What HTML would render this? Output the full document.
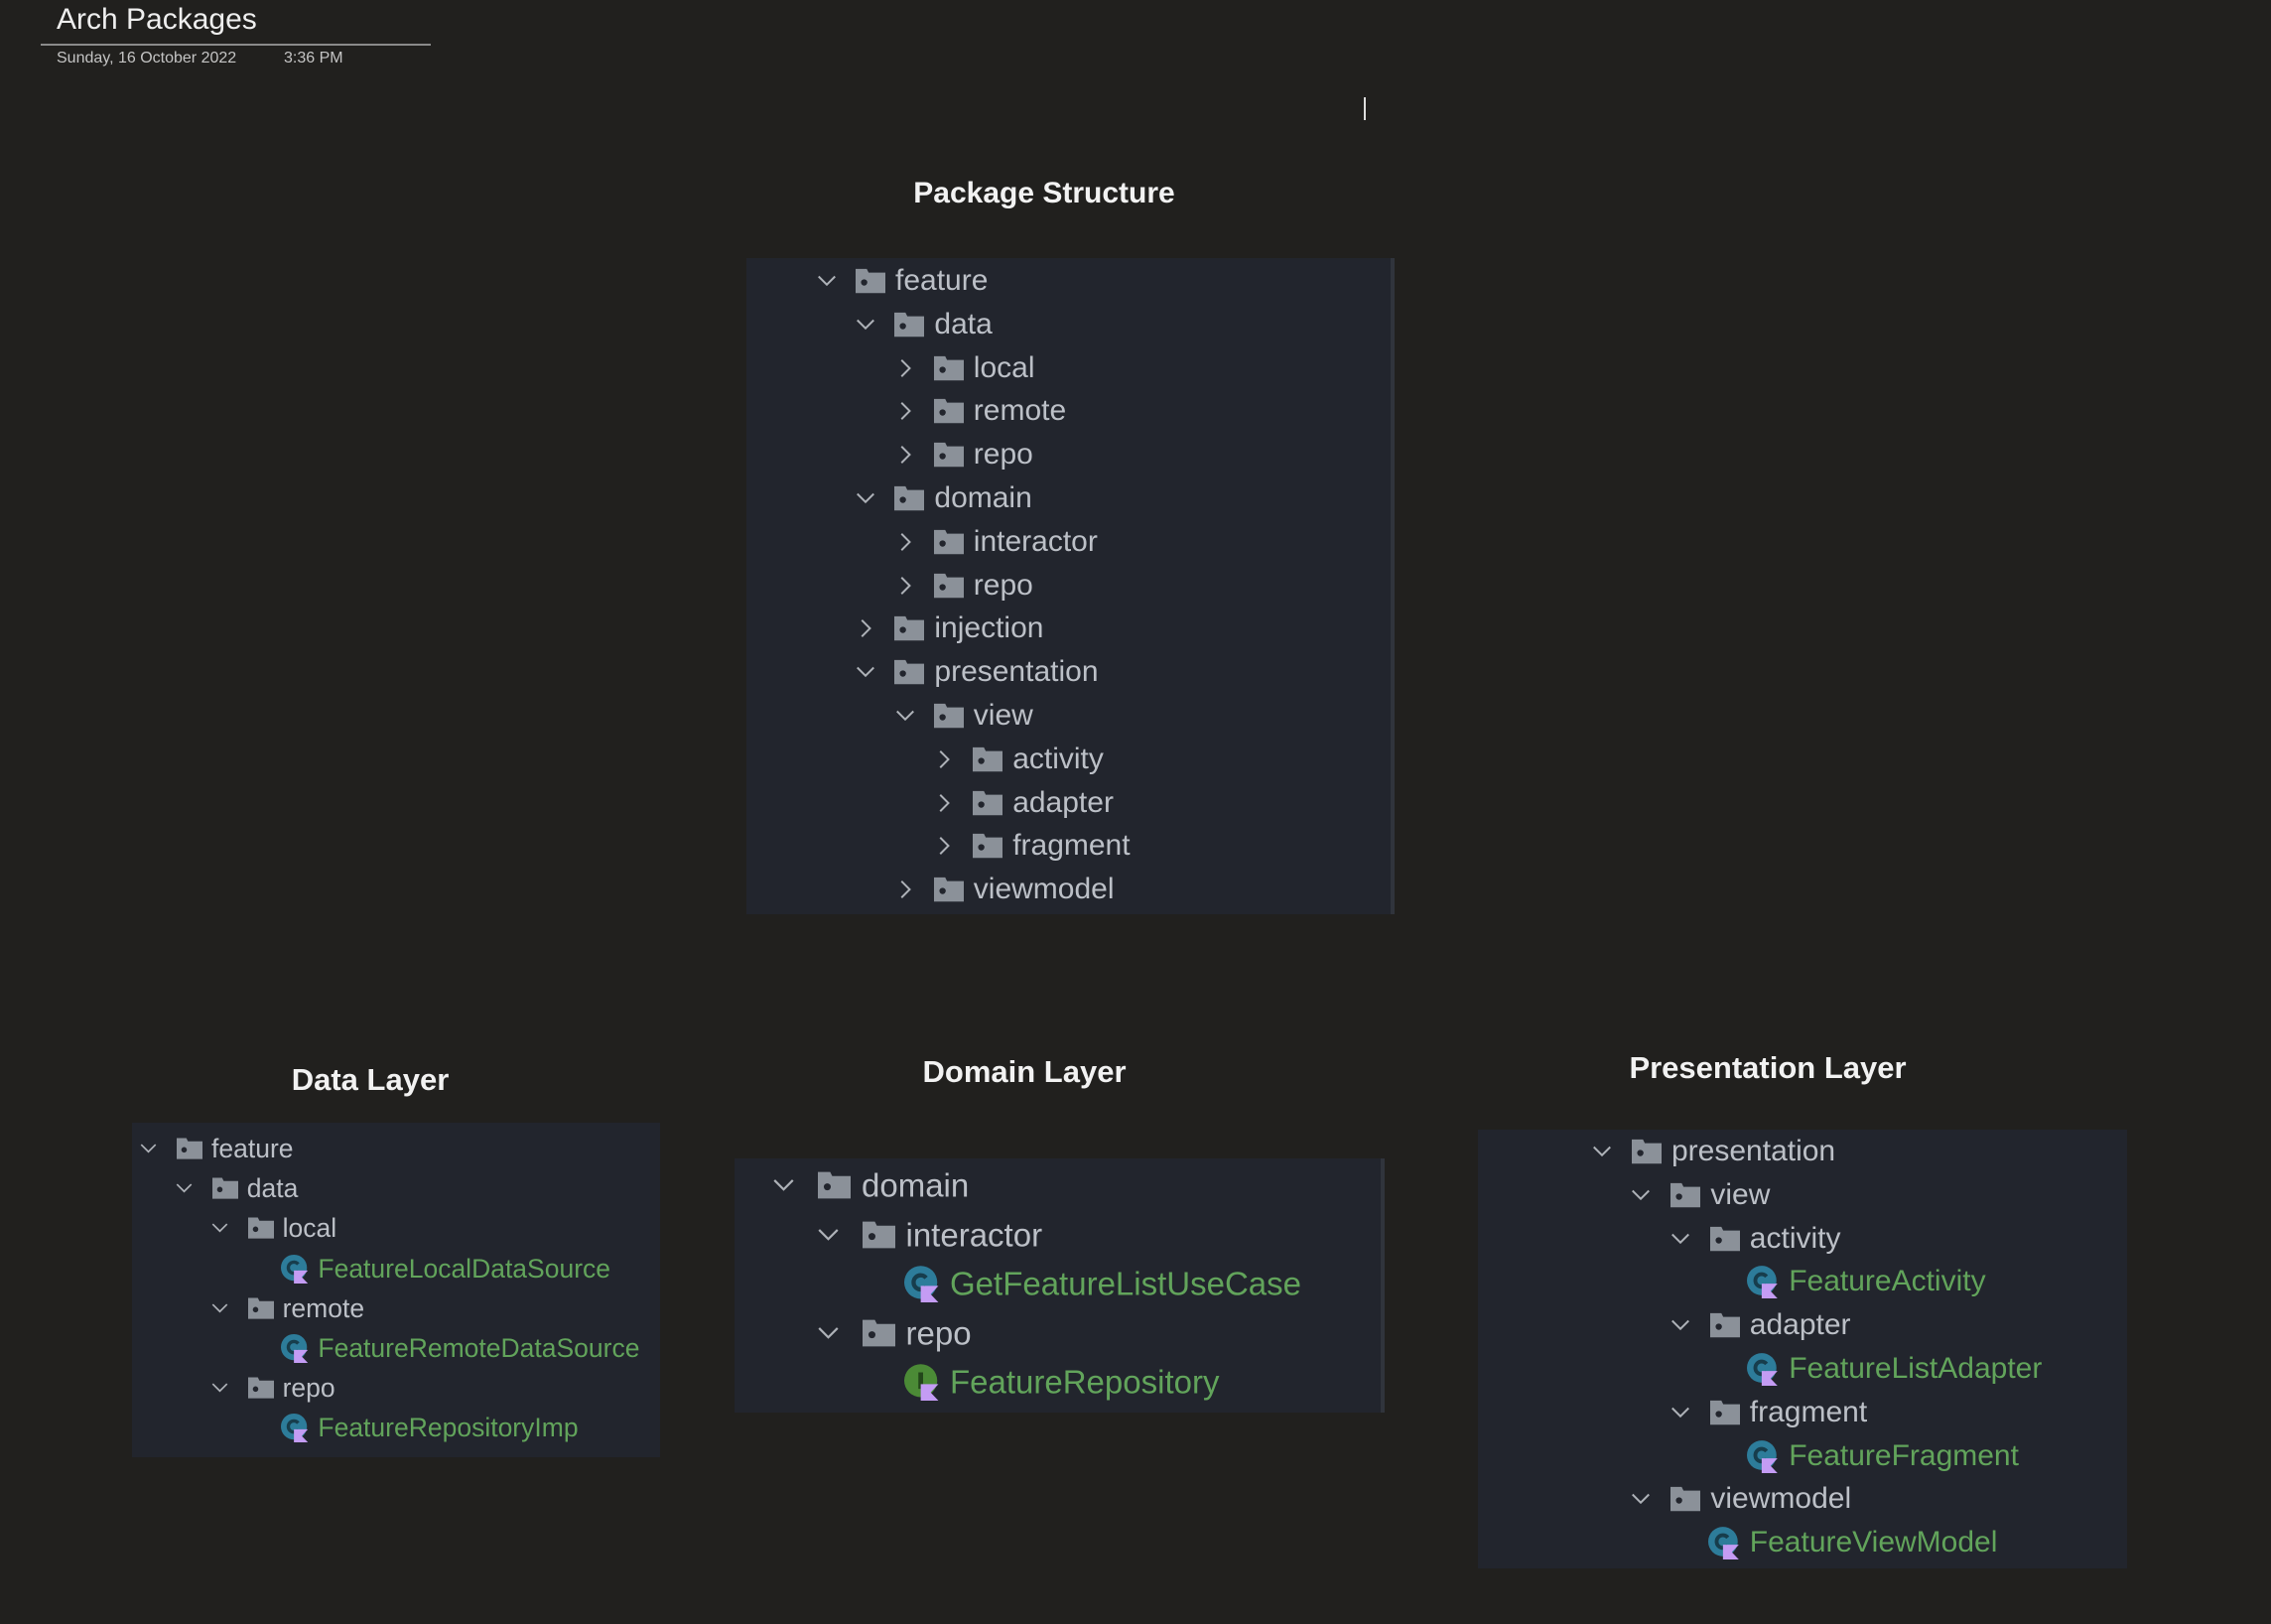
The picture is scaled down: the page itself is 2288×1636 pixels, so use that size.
<!DOCTYPE html>
<html><head><meta charset="utf-8"><style>
html,body{margin:0;padding:0}
body{width:2288px;height:1636px;background:#21201e;position:relative;overflow:hidden;font-family:"Liberation Sans",sans-serif}
.abs{position:absolute}
.panel{position:absolute;background:#22252d}
.bar{position:absolute;background:#30343c}
.title{position:absolute;transform:translate(-50%,-50%);font-weight:bold;color:#f2f2f2;white-space:nowrap}
.r{position:absolute;left:calc(var(--x0) + var(--l)*var(--ind));top:calc(var(--y0) + var(--r)*var(--step) - var(--step)/2);height:var(--step);width:600px;font-size:var(--fs)}
.r>*{position:absolute;top:50%;transform:translateY(-50%)}
.r .ch{left:-3px;width:var(--cw);height:var(--cw)}
.r .fo{left:var(--fo);width:var(--fw);height:var(--fh)}
.r .ci{left:calc(var(--fo) - 2px);width:var(--iw);height:var(--iw)}
.r .t{left:var(--to);color:#bcc0c7;white-space:nowrap;line-height:1}
.r .g{color:#62a45b}
.main{--x0:824px;--fo:38px;--to:78px;--ind:39.4px;--y0:283px;--step:43.8px;--fs:30px;--fw:30px;--fh:25px;--cw:24px;--iw:34px}
.data{--x0:142px;--fo:36px;--to:71px;--ind:35.8px;--y0:1157px;--step:40.2px;--fs:26.5px;--fw:26px;--fh:22px;--cw:21px;--iw:30px}
.dom{--x0:779px;--fo:45px;--to:89px;--ind:44.5px;--y0:1194px;--step:49.6px;--fs:33px;--fw:33px;--fh:28px;--cw:27px;--iw:38px}
.pres{--x0:1605px;--fo:39px;--to:79px;--ind:39.4px;--y0:1160px;--step:43.8px;--fs:30px;--fw:30px;--fh:25px;--cw:24px;--iw:34px}
</style></head><body>
<svg width="0" height="0" style="position:absolute">
<defs>
<symbol id="dn" viewBox="0 0 16 16"><polyline points="2.5,5 8,10.5 13.5,5" fill="none" stroke="#aeb2b8" stroke-width="1.3"/></symbol>
<symbol id="rt" viewBox="0 0 16 16"><polyline points="5.5,2.5 11,8 5.5,13.5" fill="none" stroke="#aeb2b8" stroke-width="1.3"/></symbol>
<symbol id="fd" viewBox="0 0 16 13"><path d="M0 0H6L7 2H16V13H0Z" fill="#8b9199"/><circle cx="4.6" cy="7.3" r="1.7" fill="#22252d"/></symbol>
<symbol id="cl" viewBox="0 0 16 16"><circle cx="7" cy="7.5" r="7" fill="#2d7c9a"/><path d="M9.3 5.6A3 3 0 1 0 9.3 9.4" fill="none" stroke="#173d4c" stroke-width="1.8"/><polygon points="7,9 14.5,9 11.2,12.5 14.5,16 7,16" fill="#c49cf4"/></symbol>
<symbol id="it" viewBox="0 0 16 16"><circle cx="7" cy="7.5" r="7" fill="#4b8a36"/><rect x="6" y="4" width="2" height="7" fill="#23461a"/><polygon points="7,9 14.5,9 11.2,12.5 14.5,16 7,16" fill="#c49cf4"/></symbol>
</defs></svg>

<div class="abs" style="left:57px;top:5px;font-size:30px;color:#eee;line-height:1">Arch Packages</div>
<div class="abs" style="left:41px;top:44px;width:393px;height:2px;background:#8a8a8a"></div>
<div class="abs" style="left:57px;top:50px;font-size:16px;color:#c4c4c4">Sunday, 16 October 2022</div>
<div class="abs" style="left:286px;top:50px;font-size:16px;color:#c4c4c4">3:36 PM</div>
<div class="abs" style="left:1374px;top:98px;width:2px;height:23px;background:#ddd"></div>

<div class="title" style="left:1052px;top:195px;font-size:30px">Package Structure</div>
<div class="title" style="left:373px;top:1088px;font-size:31px">Data Layer</div>
<div class="title" style="left:1032px;top:1080px;font-size:31px">Domain Layer</div>
<div class="title" style="left:1781px;top:1076px;font-size:31px">Presentation Layer</div>

<div class="panel" style="left:752px;top:260px;width:653px;height:661px"></div>
<div class="bar" style="left:1401px;top:260px;width:4px;height:661px"></div>
<div class="panel" style="left:133px;top:1131px;width:532px;height:337px"></div>
<div class="panel" style="left:740px;top:1167px;width:655px;height:256px"></div>
<div class="bar" style="left:1391px;top:1167px;width:4px;height:256px"></div>
<div class="panel" style="left:1489px;top:1138px;width:654px;height:442px"></div>

<div class="main">
<div class="r" style="--l:0;--r:0"><svg class="ch"><use href="#dn"/></svg><svg class="fo"><use href="#fd"/></svg><span class="t">feature</span></div>
<div class="r" style="--l:1;--r:1"><svg class="ch"><use href="#dn"/></svg><svg class="fo"><use href="#fd"/></svg><span class="t">data</span></div>
<div class="r" style="--l:2;--r:2"><svg class="ch"><use href="#rt"/></svg><svg class="fo"><use href="#fd"/></svg><span class="t">local</span></div>
<div class="r" style="--l:2;--r:3"><svg class="ch"><use href="#rt"/></svg><svg class="fo"><use href="#fd"/></svg><span class="t">remote</span></div>
<div class="r" style="--l:2;--r:4"><svg class="ch"><use href="#rt"/></svg><svg class="fo"><use href="#fd"/></svg><span class="t">repo</span></div>
<div class="r" style="--l:1;--r:5"><svg class="ch"><use href="#dn"/></svg><svg class="fo"><use href="#fd"/></svg><span class="t">domain</span></div>
<div class="r" style="--l:2;--r:6"><svg class="ch"><use href="#rt"/></svg><svg class="fo"><use href="#fd"/></svg><span class="t">interactor</span></div>
<div class="r" style="--l:2;--r:7"><svg class="ch"><use href="#rt"/></svg><svg class="fo"><use href="#fd"/></svg><span class="t">repo</span></div>
<div class="r" style="--l:1;--r:8"><svg class="ch"><use href="#rt"/></svg><svg class="fo"><use href="#fd"/></svg><span class="t">injection</span></div>
<div class="r" style="--l:1;--r:9"><svg class="ch"><use href="#dn"/></svg><svg class="fo"><use href="#fd"/></svg><span class="t">presentation</span></div>
<div class="r" style="--l:2;--r:10"><svg class="ch"><use href="#dn"/></svg><svg class="fo"><use href="#fd"/></svg><span class="t">view</span></div>
<div class="r" style="--l:3;--r:11"><svg class="ch"><use href="#rt"/></svg><svg class="fo"><use href="#fd"/></svg><span class="t">activity</span></div>
<div class="r" style="--l:3;--r:12"><svg class="ch"><use href="#rt"/></svg><svg class="fo"><use href="#fd"/></svg><span class="t">adapter</span></div>
<div class="r" style="--l:3;--r:13"><svg class="ch"><use href="#rt"/></svg><svg class="fo"><use href="#fd"/></svg><span class="t">fragment</span></div>
<div class="r" style="--l:2;--r:14"><svg class="ch"><use href="#rt"/></svg><svg class="fo"><use href="#fd"/></svg><span class="t">viewmodel</span></div>
</div>

<div class="data">
<div class="r" style="--l:0;--r:0"><svg class="ch"><use href="#dn"/></svg><svg class="fo"><use href="#fd"/></svg><span class="t">feature</span></div>
<div class="r" style="--l:1;--r:1"><svg class="ch"><use href="#dn"/></svg><svg class="fo"><use href="#fd"/></svg><span class="t">data</span></div>
<div class="r" style="--l:2;--r:2"><svg class="ch"><use href="#dn"/></svg><svg class="fo"><use href="#fd"/></svg><span class="t">local</span></div>
<div class="r" style="--l:3;--r:3"><svg class="ci"><use href="#cl"/></svg><span class="t g">FeatureLocalDataSource</span></div>
<div class="r" style="--l:2;--r:4"><svg class="ch"><use href="#dn"/></svg><svg class="fo"><use href="#fd"/></svg><span class="t">remote</span></div>
<div class="r" style="--l:3;--r:5"><svg class="ci"><use href="#cl"/></svg><span class="t g">FeatureRemoteDataSource</span></div>
<div class="r" style="--l:2;--r:6"><svg class="ch"><use href="#dn"/></svg><svg class="fo"><use href="#fd"/></svg><span class="t">repo</span></div>
<div class="r" style="--l:3;--r:7"><svg class="ci"><use href="#cl"/></svg><span class="t g">FeatureRepositoryImp</span></div>
</div>

<div class="dom">
<div class="r" style="--l:0;--r:0"><svg class="ch"><use href="#dn"/></svg><svg class="fo"><use href="#fd"/></svg><span class="t">domain</span></div>
<div class="r" style="--l:1;--r:1"><svg class="ch"><use href="#dn"/></svg><svg class="fo"><use href="#fd"/></svg><span class="t">interactor</span></div>
<div class="r" style="--l:2;--r:2"><svg class="ci"><use href="#cl"/></svg><span class="t g">GetFeatureListUseCase</span></div>
<div class="r" style="--l:1;--r:3"><svg class="ch"><use href="#dn"/></svg><svg class="fo"><use href="#fd"/></svg><span class="t">repo</span></div>
<div class="r" style="--l:2;--r:4"><svg class="ci"><use href="#it"/></svg><span class="t g">FeatureRepository</span></div>
</div>

<div class="pres">
<div class="r" style="--l:0;--r:0"><svg class="ch"><use href="#dn"/></svg><svg class="fo"><use href="#fd"/></svg><span class="t">presentation</span></div>
<div class="r" style="--l:1;--r:1"><svg class="ch"><use href="#dn"/></svg><svg class="fo"><use href="#fd"/></svg><span class="t">view</span></div>
<div class="r" style="--l:2;--r:2"><svg class="ch"><use href="#dn"/></svg><svg class="fo"><use href="#fd"/></svg><span class="t">activity</span></div>
<div class="r" style="--l:3;--r:3"><svg class="ci"><use href="#cl"/></svg><span class="t g">FeatureActivity</span></div>
<div class="r" style="--l:2;--r:4"><svg class="ch"><use href="#dn"/></svg><svg class="fo"><use href="#fd"/></svg><span class="t">adapter</span></div>
<div class="r" style="--l:3;--r:5"><svg class="ci"><use href="#cl"/></svg><span class="t g">FeatureListAdapter</span></div>
<div class="r" style="--l:2;--r:6"><svg class="ch"><use href="#dn"/></svg><svg class="fo"><use href="#fd"/></svg><span class="t">fragment</span></div>
<div class="r" style="--l:3;--r:7"><svg class="ci"><use href="#cl"/></svg><span class="t g">FeatureFragment</span></div>
<div class="r" style="--l:1;--r:8"><svg class="ch"><use href="#dn"/></svg><svg class="fo"><use href="#fd"/></svg><span class="t">viewmodel</span></div>
<div class="r" style="--l:2;--r:9"><svg class="ci"><use href="#cl"/></svg><span class="t g">FeatureViewModel</span></div>
</div>
</body></html>
